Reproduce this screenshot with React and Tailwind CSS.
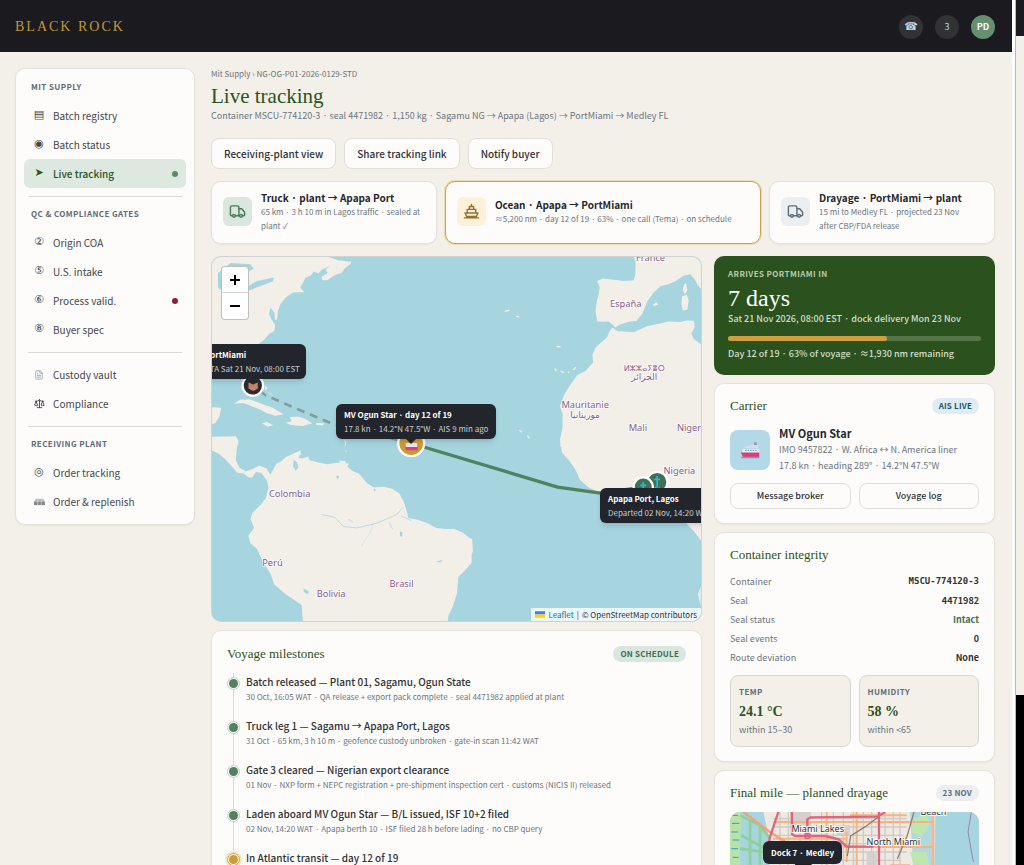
import { FileText, Scale, Truck } from "lucide-react";

const NAV = [
  {
    title: "MIT SUPPLY",
    items: [
      { icon: "▤", label: "Batch registry" },
      { icon: "◉", label: "Batch status" },
      { icon: "➤", label: "Live tracking", active: true, dot: "bg-[#5a8a6a]" },
    ],
  },
  {
    title: "QC & COMPLIANCE GATES",
    items: [
      { icon: "②", label: "Origin COA" },
      { icon: "⑤", label: "U.S. intake" },
      { icon: "⑥", label: "Process valid.", dot: "bg-[#8b1e3f]" },
      { icon: "⑧", label: "Buyer spec" },
    ],
  },
  {
    items: [
      { icon: <FileText size={10} className="text-gray-400" />, label: "Custody vault" },
      { icon: <Scale size={11} />, label: "Compliance" },
    ],
  },
  {
    title: "RECEIVING PLANT",
    items: [
      { icon: "◎", label: "Order tracking" },
      { icon: <CrateIcon />, label: "Order & replenish" },
    ],
  },
];

const MILESTONES = [
  {
    title: "Batch released — Plant 01, Sagamu, Ogun State",
    note: "30 Oct, 16:05 WAT · QA release + export pack complete · seal 4471982 applied at plant",
  },
  {
    title: "Truck leg 1 — Sagamu → Apapa Port, Lagos",
    note: "31 Oct · 65 km, 3 h 10 m · geofence custody unbroken · gate-in scan 11:42 WAT",
  },
  {
    title: "Gate 3 cleared — Nigerian export clearance",
    note: "01 Nov · NXP form + NEPC registration + pre-shipment inspection cert · customs (NICIS II) released",
  },
  {
    title: "Laden aboard MV Ogun Star — B/L issued, ISF 10+2 filed",
    note: "02 Nov, 14:20 WAT · Apapa berth 10 · ISF filed 28 h before lading · no CBP query",
  },
  {
    title: "In Atlantic transit — day 12 of 19",
    note: "AIS 9 min ago · 14.2°N 47.5°W · 17.8 kn",
    current: true,
  },
];

const INTEGRITY = [
  { label: "Container", value: "MSCU-774120-3", style: "font-['DejaVu_Sans_Mono',monospace]" },
  { label: "Seal", value: "4471982" },
  { label: "Seal status", value: "Intact", style: "text-[#3f6f50]" },
  { label: "Seal events", value: "0" },
  { label: "Route deviation", value: "None" },
];

const SERIF = "font-['Liberation_Serif',serif]";
const CARD = "rounded-[10px] border border-[#e4e2dc] bg-[#fdfcfa] shadow-xs";

function CrateIcon() {
  return (
    <svg viewBox="0 0 12 10" className="h-[9px] w-[11px]">
      <path d="M2 2h8l2 3H0z" fill="#b9bbbd" />
      <path d="M0 5h12v4H0z" fill="#84878a" />
      <path d="M4 2v7M8 2v7" stroke="#dcdcda" strokeWidth=".8" />
    </svg>
  );
}

function Sidebar() {
  return (
    <nav className={`${CARD} w-[180px] shrink-0 self-start p-2`}>
      {NAV.map((group, i) => (
        <div key={i}>
          {i > 0 && <hr className="mx-1 mt-2 mb-[7px] border-[#dcdad5]" />}
          {group.title && (
            <h2 className="mb-1 px-[7px] text-[8px] leading-5 font-bold tracking-wider text-[#5f6b76]">
              {group.title}
            </h2>
          )}
          {group.items.map((item) => (
            <a
              key={item.label}
              href="#"
              className={`flex h-[29px] items-center gap-[7px] rounded-md px-2 text-[10px] ${
                item.active ? "bg-[#dce8e0] font-medium text-[#2d5220]" : "text-[#44474b]"
              }`}
            >
              <span className="flex w-[14px] shrink-0 justify-center font-['DejaVu_Sans',sans-serif] text-[11px]">
                {item.icon}
              </span>
              <span className="flex-1 whitespace-nowrap">{item.label}</span>
              {item.dot && <span className={`size-[6px] rounded-full ${item.dot}`} />}
            </a>
          ))}
        </div>
      ))}
    </nav>
  );
}

function ShipIcon() {
  return (
    <svg viewBox="0 0 24 24" className="size-[17px]" fill="none" stroke="currentColor" strokeWidth="2" strokeLinejoin="round" strokeLinecap="round">
      <path d="M12 2v3M9 5h6v4H9zM6 9h12v5H6zM3 14h18l-2 5H5zM2 21h20" />
    </svg>
  );
}

function ShipEmoji({ className }) {
  return (
    <svg viewBox="0 0 24 24" className={className}>
      <path d="M17 3h3v5h-3z" fill="#8d8aa5" />
      <path d="M6 8l8-2h8v4H5z" fill="#d8dcec" />
      <path d="M3 11h20v5H3z" fill="#f0eef8" />
      <path d="M6 12.500h15" stroke="#69b4d8" strokeWidth="1.500" strokeDasharray="2 1" />
      <path d="M1 15h22v6H4z" fill="#df3d70" />
      <path d="M1 20h22v2H2z" fill="#6f9ed5" />
    </svg>
  );
}

function Leg({ icon, tone, title, note, active }) {
  return (
    <div
      className={`flex min-h-[63px] items-center gap-[9px] rounded-[10px] border bg-[#fdfcfa] px-[11px] pt-[7px] pb-[9px] ${
        active ? "border-[#c9a24a] ring-1 ring-[#ecdcae]" : "border-[#e4e2dc] shadow-xs"
      }`}
    >
      <span className={`flex size-[29px] shrink-0 items-center justify-center rounded-md ${tone}`}>{icon}</span>
      <div>
        <h3 className="text-[10px] leading-[15px] font-bold text-[#26282c]">{title}</h3>
        <p className="text-[8px] leading-[14px] text-[#6c7580]">{note}</p>
      </div>
    </div>
  );
}

function Tooltip({ place, title, note, tip }) {
  return (
    <div className={`absolute rounded-md bg-[#22252b] px-2 py-1 whitespace-nowrap text-white shadow-md ${place}`}>
      <p className="text-[8px] leading-[14px] font-bold">{title}</p>
      <p className="text-[8px] leading-[13px] text-[#c6cdd3]">{note}</p>
      <span className={`absolute top-full border-x-[5px] border-t-[5px] border-x-transparent border-t-[#22252b] ${tip}`} />
    </div>
  );
}

function WorldMap() {
  return (
    <section className="relative h-[366px] overflow-hidden rounded-[10px] border border-[#cfd4d2] bg-[#a6d4df]" aria-label="Voyage map">
      <svg viewBox="0 0 1473 1098" preserveAspectRatio="xMinYMin slice" className="absolute inset-0 size-full">
        <g fill="#f2efe9">
          {/* North America, Caribbean */}
          <g transform="translate(-18 -18)">
            <path d="M0 0H442L436 38 418 52 408 66 388 72 366 88 350 88 348 78 366 66 360 56 376 44 350 56 338 68 324 62 316 74 300 80 291 98 284 110 296 124 280 124 262 125 240 140 224 160 217 180 214 206 208 208 206 186 194 170 190 190 198 208 208 222 206 240 190 250 172 270 150 285 146 300 166 350 168 398 150 408 130 370 118 346 60 335 0 345z" />
            <path d="M0 470l46 2-6 28-12 18-28 10zM84 460l18-12 30-1 34 12 36 14 32 19-26 4-26-8-18-10-30-12-22-8zM168 519l16-4 18 10-16 4zM252 500l28-1 18 6 22 14-28 8-36-3-16-7 18-4zM332 518l24 1-4 6-20-1zM0 568l10-8 84 4 4 20H0z" />
            <path d="M178 408l6 3-4 8zM188 424l12 12M200 440l8 10" stroke="#f2efe9" strokeWidth="2" />
          </g>
          {/* South America */}
          <g transform="translate(-18 522)">
            <path d="M0 0h12l-2 20 80-2 8 14-6 28-2 30 10 22 20 12 22-8 18-10 22 8 12 20 10-20 8-14 14-6 12-12 18-8 16-8 12-6 2 10-8 14 16 0 14-6 4 12 30 8 24 4 30-4 34 2-4 10 14 12 20 8 26 30 20 12 30-2 24 6 22 14 14 26 8 26 6 22 30 6 28 10 26 14 28 3 26 0 26 12 26 20V400l-24 26-16 16-4 48-12 40-14 28-2 20H292l-4-52-48-32-35-30-10-30-25-40-16-36-20-18-7-22 18-24-11-26 6-20 25-24 15-20 8-30-4-22-18-24-16-2-10 16-12 0-14-12-20-2-22-26-16-16-18-16L0 52z" />
            <path d="M418 30l3 4-2 14M420 60l2 6M402 92l18 2v10h-14z" stroke="#f2efe9" strokeWidth="2" />
          </g>
          <path d="M740 836l24 6 20 8 2 36-12 28-24 20-18 28z" />
          {/* Europe and Africa */}
          <g transform="translate(732 -18)">
            <path d="M530 0l14 30-1 40-4 18-30 2-24-3-40-4-17 7 8 18-3 22-6 22-4 30 6 30 16 1 18-1 12 10 8 8 12-8 26-8 26-4 18-22 14-36 20-28 20-18 24-6 22-10 24-16 20-4 12 14 12 22 30 30V0zM690 100l6-4 4 24-8 10-6-14zM684 136l14-4 6 18-4 26-14 4-4-20zM596 160l12-6 4 8-12 4zM570 152l12 2z" />
            <path d="M474 230l16 12 50 2 40-18 38-8 24-6 34 2 22-5 22 1 2 20-10 18 6 16 30 22V590H318l-2-20 8-40 0-40-8-22 14-38 20-30 18-26 24-12 24-26-2-24 10-22 34-30 8-20z" />
            <path d="M300 354l6 8M318 362l10 4M356 358l8-8M340 364l4 2M150 182l14-4M184 196l10 3M306 288h12M194 540l8 6M218 556l6 8" stroke="#f2efe9" strokeWidth="4" />
          </g>
          <g transform="translate(732 522)">
            <path d="M318 20h440v325l-18-14-20-26-20-22-20-22-30-45-50-28-80 4-80-3-36-16-28-24-12-28-20-30-22-24-4-38zM740 470l-8 24 8 36z" />
          </g>
        </g>
        {/* lakes and rivers */}
        <g fill="#a6d4df" stroke="none">
          <path d="M18 48l14-10 24-20 60 4 10 14-34 14-30 6-22 14-14 30-8-10zM102 92l34-20 50-10-2 12-40 14-30 12zM350 0h80l-14 14-34-4z" />
          <path d="M246 610l10 8 4 16-8 10-8-14zM374 660l10-2-6 12zM566 826l8 4-2 14-6-4zM276 998l16 10-4 8-12-8zM674 918l22-6-8 8zM486 698l8 2-4 8z" />
        </g>
        <g fill="none" stroke="#a6d4df" strokeWidth="3">
          <path d="M330 776l40 8 26 28 40 4 60-14 60-26 20-22M534 800l10 20M570 780l30 14M410 790l14 8" opacity=".75" />
          <path d="M486 800l-6 22-30 50" opacity=".4" />
        </g>
        {/* country labels */}
        <g fill="#85608a" stroke="#fff" strokeOpacity=".8" strokeWidth="5" paintOrder="stroke" fontFamily="Noto Sans, sans-serif" fontSize="28" textAnchor="middle">
          <text x="1321" y="12">France</text>
          <text x="1246" y="150">España</text>
          <text x="1302" y="342" fontFamily="DejaVu Sans, sans-serif" fontSize="24">ⵍⵣⵣⴰⵢⴻⵔ</text>
          <text x="1302" y="372" fontFamily="DejaVu Sans, sans-serif" fontSize="27">الجزائر</text>
          <text x="1124" y="456">Mauritanie</text>
          <text x="1124" y="484" fontFamily="DejaVu Sans, sans-serif" fontSize="27">موريتانيا</text>
          <text x="1283" y="524">Mali</text>
          <text x="1437" y="524">Niger</text>
          <text x="1408" y="653">Nigeria</text>
          <text x="234" y="723">Colombia</text>
          <text x="182" y="932">Perú</text>
          <text x="359" y="1023">Bolivia</text>
          <text x="571" y="993">Brasil</text>
        </g>
        {/* route */}
        <path d="M600 561L366 504 288 471 162 417 123 387" fill="none" stroke="#7f9f98" strokeWidth="8" strokeDasharray="24 18" />
        <path d="M600 561L1041 693 1170 711 1299 693" fill="none" stroke="#4f825e" strokeWidth="10" strokeLinejoin="round" />
        <g stroke="#fff" strokeWidth="7">
          <circle cx="123" cy="387" r="31" fill="#2b2d33" />
          <circle cx="600" cy="561" r="39" fill="#cd9b33" />
          <circle cx="1341" cy="678" r="31" fill="#3f7255" />
          <circle cx="1299" cy="693" r="29" fill="#3f7255" />
        </g>
        <path d="M110 378l14 6 14-6v18l-14 8-14-8z" fill="#c98366" />
        <path d="M584 560h34v14h-34z" fill="#e9e5f3" />
        <path d="M582 572h38v10h-36z" fill="#dc3f75" />
        <g fill="none" stroke="#34b3dc" strokeWidth="5">
          <path d="M1341 660v34M1332 670h18M1299 678v30M1290 688h18" />
        </g>
        <path d="M1326 704q6-14 15-8 14-4 16 8z" fill="#fff" />
      </svg>

      <Tooltip place="top-[87px] -left-[15px] w-[109px]" title="PortMiami" note="ETA Sat 21 Nov, 08:00 EST" tip="left-[51px]" />
      <Tooltip place="top-[147px] left-[124px]" title="MV Ogun Star · day 12 of 19" note="17.8 kn · 14.2°N 47.5°W · AIS 9 min ago" tip="left-[70px]" />
      <Tooltip place="top-[231px] left-[388px]" title="Apapa Port, Lagos" note="Departed 02 Nov, 14:20 WAT" tip="hidden" />

      <div className="absolute top-[9px] left-[9px] flex w-7 flex-col rounded-sm border border-black/25 bg-white text-black">
        <button type="button" aria-label="Zoom in" className="flex h-[26px] items-center justify-center border-b border-gray-300">
          <svg viewBox="0 0 12 12" className="size-3" stroke="currentColor" strokeWidth="2"><path d="M6 1v10M1 6h10" /></svg>
        </button>
        <button type="button" aria-label="Zoom out" className="flex h-[26px] items-center justify-center">
          <svg viewBox="0 0 12 12" className="size-3" stroke="currentColor" strokeWidth="2"><path d="M1 6h10" /></svg>
        </button>
      </div>

      <p className="absolute right-0 bottom-0 flex h-[13px] items-center gap-[3px] bg-white/80 px-1 text-[8px] whitespace-nowrap text-[#333]">
        <svg viewBox="0 0 12 8" className="h-[7px] w-[10px]"><path d="M0 0h12v4H0z" fill="#4c7be1" /><path d="M0 4h12v4H0z" fill="#ffd500" /></svg>
        <a href="#" className="text-[#0078a8]">Leaflet</a>
        <span>|</span>
        <span>© OpenStreetMap contributors</span>
      </p>
    </section>
  );
}

function CardTitle({ children, badge, tone }) {
  return (
    <div className="flex items-center justify-between">
      <h2 className={`${SERIF} text-[13px] leading-4 text-[#2d5220]`}>{children}</h2>
      {badge && (
        <span className={`rounded-full px-[7px] text-[8px] leading-4 font-bold tracking-wide ${tone}`}>{badge}</span>
      )}
    </div>
  );
}

function Milestones() {
  return (
    <section className={`${CARD} px-[15px] py-[15px]`}>
      <CardTitle badge="ON SCHEDULE" tone="bg-[#d9e7de] text-[#3f6f50]">Voyage milestones</CardTitle>
      <ol className="mt-[11px]">
        {MILESTONES.map((m) => (
          <li key={m.title} className="flex gap-[6px]">
            <div className="flex w-[13px] shrink-0 flex-col items-center">
              <span className="h-1 w-px bg-[#dcdad5]" />
              <span
                className={`size-[13px] shrink-0 rounded-full border p-px ${
                  m.current ? "border-[#cf9c3c] ring-2 ring-[#f4e6c8]" : "border-[#b9d3c2]"
                }`}
              >
                <span className={`block size-[9px] rounded-full ${m.current ? "bg-[#cf9c3c]" : "bg-[#55805f]"}`} />
              </span>
              <span className="w-px flex-1 bg-[#dcdad5]" />
            </div>
            <div className="pb-[13px]">
              <h3 className="text-[10px] leading-[17px] font-medium text-[#303236]">{m.title}</h3>
              <p className="text-[8px] leading-[14px] text-[#6c7580]">{m.note}</p>
            </div>
          </li>
        ))}
      </ol>
    </section>
  );
}

function Reading({ label, value, range }) {
  return (
    <div className="flex-1 rounded-lg border border-[#d8d6d0] bg-[#f3f0e9] px-2 pt-[10px] pb-[9px]">
      <h3 className="text-[8px] leading-3 font-bold tracking-wider text-[#5f6b76]">{label}</h3>
      <p className={`${SERIF} mt-1 text-[14px] leading-5 font-bold text-[#2d5220]`}>{value}</p>
      <p className="text-[9px] leading-[15px] text-[#6c7580]">{range}</p>
    </div>
  );
}

function StreetMap() {
  return (
    <div className="relative h-[150px] overflow-hidden rounded-[10px] bg-[#eeeae3]">
      <svg viewBox="0 0 747 450" preserveAspectRatio="xMinYMin slice" className="absolute inset-0 size-full" fill="none">
        <path d="M0 0h100l20 90-10 360H0z" fill="#a6d4df" />
        <path d="M0 0h34l-4 120 4 330H0z" fill="#b9e2a8" />
        <path d="M30 10l60 30 30 40M30 110l70 10M60 20v400M90 40v400M34 70l90 50" stroke="#8fcf9a" strokeWidth="8" />
        <path d="M4 10h20M6 34h22M4 60h20M8 84h20M4 110h20M8 136h18" stroke="#2f9bd0" strokeWidth="3" />
        <path d="M540 0h70v450h-70l-50-60 20-160 40-60z" fill="#a6d4df" opacity=".85" />
        <path d="M550 24l36-20 14 30-24 40-32-14zM540 120h50l10 50-40 20z" fill="#bfe6b0" />
        <path d="M616 0h131v450H610z" fill="#a6d4df" />
        <path d="M130 20h400M130 45h400M130 70h390M130 95h400M130 120h400M130 145h380M150 0v450M175 0v450M210 0v450M240 0v450M275 0v450M310 0v450M340 0v450M370 0v450M400 0v450M425 0v450M465 0v450M490 0v450M510 0v220" stroke="#cfc9c3" strokeWidth="4" />
        <path d="M180 0h60v40h-60zM320 40h40v30h-40zM410 120h30v40h-30z" fill="#d4d0ce" />
        <path d="M130 80h220M130 30h480M340 105h270M290 0v200M380 0v450M360 10h170M610 0v450M150 120h90M480 160h60M350 60v90" stroke="#f9b27c" strokeWidth="6" />
        <path d="M40 0l80 60 70 45" stroke="#f4a07c" strokeWidth="7" />
        <path d="M145 0l-25 75-10 50M186 0v66l10 6h90l40 10 24 22h80M232 70V22l10-6 200-2 24-14M447 0v450M524 0" stroke="#e3637f" strokeWidth="7" />
        <circle cx="232" cy="71" r="8" stroke="#e3637f" strokeWidth="5" />
        <path d="M446 14l-40 30-44 28-10 60M552 0l-20 70-30 70" stroke="#8a7f78" strokeWidth="4" />
        <path d="M724 0l-10 60 16 90" stroke="#9686b0" strokeWidth="3" />
        <g fill="#333" stroke="#fff" strokeWidth="6" strokeOpacity=".8" paintOrder="stroke" fontFamily="Noto Sans, sans-serif" fontSize="27" textAnchor="middle">
          <text x="263" y="60">Miami Lakes</text>
          <text x="490" y="98">North Miami</text>
          <text x="610" y="8">Beach</text>
        </g>
        <circle cx="220" cy="174" r="30" fill="#1d1e23" />
      </svg>
      <p className="absolute top-[29px] left-[33px] rounded-md bg-[#22252b] px-2 text-[8px] leading-[23px] font-bold whitespace-nowrap text-white">
        Dock 7 · Medley
      </p>
    </div>
  );
}

const smallButton = "h-[26px] flex-1 rounded-lg border border-[#dfddd8] bg-[#fdfcfa] text-[9px] font-medium text-[#303236]";

export default function App() {
  return (
    <div className="flex h-screen overflow-hidden bg-[#f3f0e9] font-['Noto_Sans_CJK_JP',sans-serif] text-[#303236]">
      <div className="min-w-0 flex-1">
        <header className="flex h-[52px] items-center justify-between bg-[#1b1b1f] pr-[17px] pl-[15px]">
          <a href="#" className={`${SERIF} text-[14px] tracking-[2px] text-[#c4953a]`}>BLACK ROCK</a>
          <div className="flex items-center gap-3 pt-[2px]">
            <button type="button" aria-label="Call" className="size-6 rounded-full bg-[#313136] font-['DejaVu_Sans',sans-serif] text-[11px] font-bold text-[#c1d0d8]">☎</button>
            <button type="button" aria-label="Notifications" className="size-6 rounded-full bg-[#313136] text-[9px] text-[#c1d0d8]">3</button>
            <button type="button" aria-label="Account" className="size-6 rounded-full bg-[#65906f] text-[9px] font-bold text-white">PD</button>
          </div>
        </header>

        <div className="flex gap-4 pt-4 pr-[17px] pl-[15px]">
          <Sidebar />

          <main className="min-w-0 flex-1">
            <p className="text-[8px] leading-3 text-[#6c7580]">Mit Supply › NG-OG-P01-2026-0129-STD</p>
            <h1 className={`${SERIF} mt-[2px] text-[21px] leading-7 text-[#2d5220]`}>Live tracking</h1>
            <p className="text-[9px] leading-3 text-[#6c7580]">
              Container MSCU-774120-3 · seal 4471982 · 1,150 kg · Sagamu NG → Apapa (Lagos) → PortMiami → Medley FL
            </p>

            <div className="mt-4 flex gap-2">
              {["Receiving-plant view", "Share tracking link", "Notify buyer"].map((label) => (
                <button key={label} type="button" className="h-[31px] rounded-lg border border-[#e0ded9] bg-[#fdfcfa] px-3 text-[10px] font-medium text-[#303236]">
                  {label}
                </button>
              ))}
            </div>

            <div className="mt-3 grid grid-cols-[1fr_1.4fr_1fr] gap-2">
              <Leg icon={<Truck size={17} />} tone="bg-[#d9e7de] text-[#4a7a5a]" title="Truck · plant → Apapa Port" note="65 km · 3 h 10 m in Lagos traffic · sealed at plant ✓" />
              <Leg active icon={<ShipIcon />} tone="bg-[#fdf1da] text-[#94712a]" title="Ocean · Apapa → PortMiami" note="≈5,200 nm · day 12 of 19 · 63% · one call (Tema) · on schedule" />
              <Leg icon={<Truck size={17} />} tone="bg-[#eceff1] text-[#5f6b76]" title="Drayage · PortMiami → plant" note={"15 mi to Medley FL · projected 23 Nov after\u00a0CBP/FDA release"} />
            </div>

            <div className="mt-3 flex gap-3">
              <div className="flex min-w-0 flex-1 flex-col gap-2">
                <WorldMap />
                <Milestones />
              </div>

              <div className="flex w-[281px] shrink-0 flex-col gap-2">
                <section className="rounded-[10px] bg-[#2b521e] px-[14px] pt-3 pb-[14px] text-[#d3dfcd]">
                  <h2 className="text-[8px] leading-3 font-bold tracking-wider text-[#b5c9ac]">ARRIVES PORTMIAMI IN</h2>
                  <p className={`${SERIF} mt-1 text-2xl leading-7 text-white`}>7 days</p>
                  <p className="text-[9px] leading-[14px] font-medium">Sat 21 Nov 2026, 08:00 EST · dock delivery Mon 23 Nov</p>
                  <div className="mt-[10px] h-[5px] rounded-full bg-[#557548]">
                    <div className="h-full w-[63%] rounded-full bg-[#cd9f3d]" />
                  </div>
                  <p className="mt-[6px] text-[9px] leading-[14px] font-medium">Day 12 of 19 · 63% of voyage · ≈1,930 nm remaining</p>
                </section>

                <section className={`${CARD} px-[15px] py-[14px]`}>
                  <CardTitle badge="AIS LIVE" tone="bg-[#deedf5] text-[#20566b]">Carrier</CardTitle>
                  <div className="mt-[11px] flex items-center gap-[9px]">
                    <span className="flex size-10 shrink-0 items-center justify-center rounded-lg bg-[#b3d8e8]">
                      <ShipEmoji className="size-5" />
                    </span>
                    <div>
                      <h3 className="text-[11px] leading-[17px] font-bold text-[#26282c]">MV Ogun Star</h3>
                      <p className="text-[9px] leading-4 text-[#6c7580]">IMO 9457822 · W. Africa ↔ N. America liner</p>
                      <p className="text-[9px] leading-4 text-[#6c7580]">17.8 kn · heading 289° · 14.2°N 47.5°W</p>
                    </div>
                  </div>
                  <div className="mt-[9px] flex gap-2">
                    <button type="button" className={smallButton}>Message broker</button>
                    <button type="button" className={smallButton}>Voyage log</button>
                  </div>
                </section>

                <section className={`${CARD} px-[15px] py-[14px]`}>
                  <CardTitle>Container integrity</CardTitle>
                  <dl className="mt-[9px] text-[9px] leading-[19px]">
                    {INTEGRITY.map((row) => (
                      <div key={row.label} className="flex justify-between">
                        <dt className="text-[#6c7580]">{row.label}</dt>
                        <dd className={`font-bold ${row.style || "text-[#303236]"}`}>{row.value}</dd>
                      </div>
                    ))}
                  </dl>
                  <div className="mt-2 flex gap-2">
                    <Reading label="TEMP" value="24.1 °C" range="within 15–30" />
                    <Reading label="HUMIDITY" value="58 %" range="within <65" />
                  </div>
                </section>

                <section className={`${CARD} px-[15px] py-[14px]`}>
                  <CardTitle badge="23 NOV" tone="bg-[#eceff1] text-[#5f6b76]">Final mile — planned drayage</CardTitle>
                  <div className="mt-[11px]">
                    <StreetMap />
                  </div>
                </section>
              </div>
            </div>
          </main>
        </div>
      </div>

      {/* right edge of the frame */}
      <div className="flex w-3 shrink-0 bg-white">
        <div className="ml-[3px] flex flex-1 flex-col border-l border-[#b9b9b9]">
          <div className="h-9 bg-[#1b1b1f]" />
          <div className="h-[659px] bg-[#f3f0e9]" />
          <div className="flex-1 bg-black" />
        </div>
      </div>
    </div>
  );
}
